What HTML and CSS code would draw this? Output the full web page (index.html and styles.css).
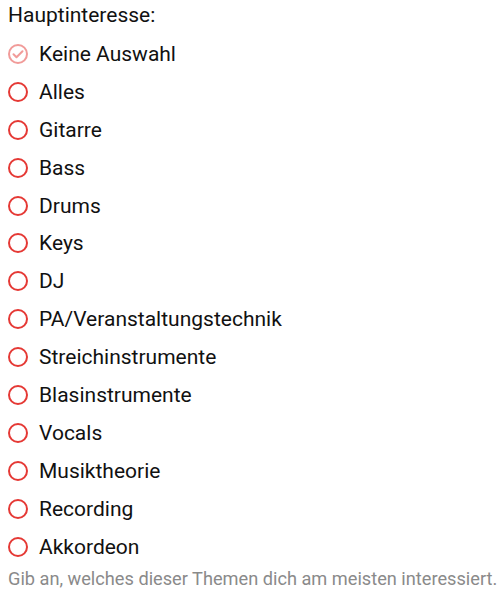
FILE: index.html
```html
<!DOCTYPE html>
<html lang="de">
<head>
    <meta charset="UTF-8">
    <meta name="viewport" content="width=device-width, initial-scale=1.0">
    <title>Hauptinteresse</title>
    <link rel="stylesheet" href="styles.css">
</head>
<body>
<div class="field">
    <div class="field-label">Hauptinteresse:</div>

    <!-- Options -->
    <div class="options">
        <label class="option selected">
            <svg class="radio" viewBox="0 0 20 20"><circle cx="10" cy="10" r="9"/><path d="M5.5 10.2l3 3 6-6"/></svg>
            <span>Keine Auswahl</span>
        </label>
        <label class="option">
            <svg class="radio" viewBox="0 0 20 20"><circle cx="10" cy="10" r="9"/></svg>
            <span>Alles</span>
        </label>
        <label class="option">
            <svg class="radio" viewBox="0 0 20 20"><circle cx="10" cy="10" r="9"/></svg>
            <span>Gitarre</span>
        </label>
        <label class="option">
            <svg class="radio" viewBox="0 0 20 20"><circle cx="10" cy="10" r="9"/></svg>
            <span>Bass</span>
        </label>
        <label class="option">
            <svg class="radio" viewBox="0 0 20 20"><circle cx="10" cy="10" r="9"/></svg>
            <span>Drums</span>
        </label>
        <label class="option">
            <svg class="radio" viewBox="0 0 20 20"><circle cx="10" cy="10" r="9"/></svg>
            <span>Keys</span>
        </label>
        <label class="option">
            <svg class="radio" viewBox="0 0 20 20"><circle cx="10" cy="10" r="9"/></svg>
            <span>DJ</span>
        </label>
        <label class="option">
            <svg class="radio" viewBox="0 0 20 20"><circle cx="10" cy="10" r="9"/></svg>
            <span>PA/Veranstaltungstechnik</span>
        </label>
        <label class="option">
            <svg class="radio" viewBox="0 0 20 20"><circle cx="10" cy="10" r="9"/></svg>
            <span>Streichinstrumente</span>
        </label>
        <label class="option">
            <svg class="radio" viewBox="0 0 20 20"><circle cx="10" cy="10" r="9"/></svg>
            <span>Blasinstrumente</span>
        </label>
        <label class="option">
            <svg class="radio" viewBox="0 0 20 20"><circle cx="10" cy="10" r="9"/></svg>
            <span>Vocals</span>
        </label>
        <label class="option">
            <svg class="radio" viewBox="0 0 20 20"><circle cx="10" cy="10" r="9"/></svg>
            <span>Musiktheorie</span>
        </label>
        <label class="option">
            <svg class="radio" viewBox="0 0 20 20"><circle cx="10" cy="10" r="9"/></svg>
            <span>Recording</span>
        </label>
        <label class="option">
            <svg class="radio" viewBox="0 0 20 20"><circle cx="10" cy="10" r="9"/></svg>
            <span>Akkordeon</span>
        </label>
    </div>

    <div class="hint">Gib an, welches dieser Themen dich am meisten interessiert.</div>
</div>
</body>
</html>
```

FILE: styles.css
```css
body {
    font-family: Roboto, "Noto Sans", sans-serif;
    margin: 0;
    padding: 0;
    color: #111;
    background: #fff;
}
.field {
    padding: 3px 0 0 8px;
}
.field-label {
    font-size: 21px;
    line-height: 24px;
    margin-bottom: 8px;
}
.options {
    display: flex;
    flex-direction: column;
}
.option {
    display: flex;
    align-items: center;
    gap: 11px;
    height: 37.9px;
    font-size: 21px;
}
.radio {
    width: 20px;
    height: 20px;
    flex-shrink: 0;
    fill: none;
    stroke: #e53935;
    stroke-width: 2;
}
.option.selected .radio {
    opacity: 0.5;
    stroke-linecap: round;
    stroke-linejoin: round;
}
.hint {
    font-size: 18.2px;
    color: #8a8a8a;
    margin-top: 3px;
    white-space: nowrap;
}
```
